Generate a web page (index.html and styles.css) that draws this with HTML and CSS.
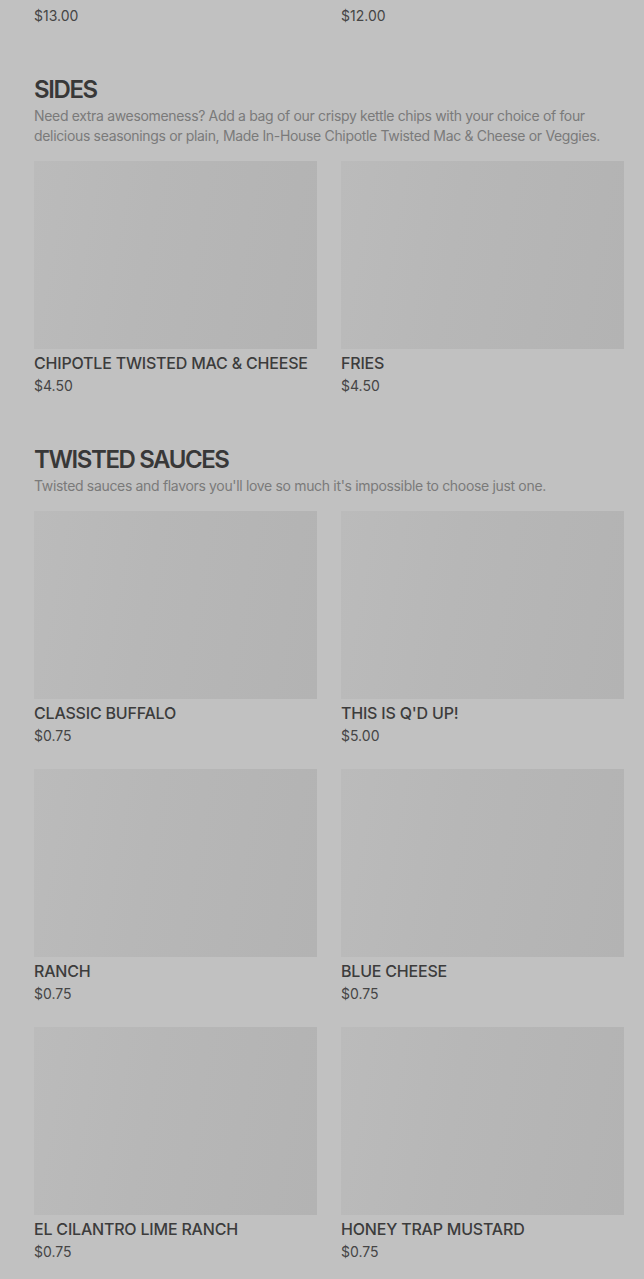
FILE: index.html
```html
<!DOCTYPE html>
<html lang="en">
<head>
<meta charset="utf-8">
<title>Menu</title>
<link rel="stylesheet" href="styles.css">
</head>
<body>
<main class="menu">
  <section class="section section-cut">
    <div class="grid">
      <article class="card">
        <h3 class="card-title">TWISTED COMBO PLATTER</h3>
        <p class="card-price">$13.00</p>
      </article>
      <article class="card">
        <h3 class="card-title">WINGS BASKET</h3>
        <p class="card-price">$12.00</p>
      </article>
    </div>
  </section>

  <section class="section">
    <h2 class="section-title">SIDES</h2>
    <p class="section-desc">Need extra awesomeness? Add a bag of our crispy kettle chips with your choice of four delicious seasonings or plain, Made In-House Chipotle Twisted Mac &amp; Cheese or Veggies.</p>
    <div class="grid">
      <article class="card">
        <div class="card-img"></div>
        <h3 class="card-title">CHIPOTLE TWISTED MAC &amp; CHEESE</h3>
        <p class="card-price">$4.50</p>
      </article>
      <article class="card">
        <div class="card-img"></div>
        <h3 class="card-title">FRIES</h3>
        <p class="card-price">$4.50</p>
      </article>
    </div>
  </section>

  <section class="section">
    <h2 class="section-title">TWISTED SAUCES</h2>
    <p class="section-desc">Twisted sauces and flavors you'll love so much it's impossible to choose just one.</p>
    <div class="grid">
      <article class="card">
        <div class="card-img"></div>
        <h3 class="card-title">CLASSIC BUFFALO</h3>
        <p class="card-price">$0.75</p>
      </article>
      <article class="card">
        <div class="card-img"></div>
        <h3 class="card-title">THIS IS Q'D UP!</h3>
        <p class="card-price">$5.00</p>
      </article>
      <article class="card">
        <div class="card-img"></div>
        <h3 class="card-title">RANCH</h3>
        <p class="card-price">$0.75</p>
      </article>
      <article class="card">
        <div class="card-img"></div>
        <h3 class="card-title">BLUE CHEESE</h3>
        <p class="card-price">$0.75</p>
      </article>
      <article class="card">
        <div class="card-img"></div>
        <h3 class="card-title">EL CILANTRO LIME RANCH</h3>
        <p class="card-price">$0.75</p>
      </article>
      <article class="card">
        <div class="card-img"></div>
        <h3 class="card-title">HONEY TRAP MUSTARD</h3>
        <p class="card-price">$0.75</p>
      </article>
    </div>
  </section>
</main>
</body>
</html>
```

FILE: styles.css
```css
html, body {
  margin: 0;
  padding: 0;
  background: #c1c1c1;
}

body {
  font-family: "Inter", "Roboto", "Liberation Sans", sans-serif;
  color: #3a3a3a;
}

.menu {
  display: flex;
  flex-direction: column;
  gap: 50px;
  padding: 0 20px 24px 34px;
}

.section-cut {
  margin-top: -21px;
}

.section {
  display: flex;
  flex-direction: column;
}

.section-title {
  margin: 0;
  font-size: 24px;
  line-height: 30px;
  font-weight: 600;
  letter-spacing: -1.4px;
  color: #383838;
}

.section-desc {
  margin: 1px 0 15px;
  font-size: 14px;
  line-height: 20px;
  color: #7a7a7a;
  letter-spacing: -0.33px;
}

.grid {
  display: grid;
  grid-template-columns: 283px 283px;
  column-gap: 24px;
  row-gap: 24px;
}

.card {
  display: flex;
  flex-direction: column;
}

.card-img {
  height: 188px;
  background: linear-gradient(100deg, #bbbbbb 0%, #b7b7b7 40%, #b3b3b3 100%);
}

.card-title {
  margin: 2px 0 0;
  font-size: 16px;
  line-height: 24px;
  font-weight: 500;
  color: #3c3c3c;
  letter-spacing: -0.2px;
}

.card-price {
  margin: 1px 0 -1px;
  font-size: 14px;
  line-height: 20px;
  color: #454545;
}
```
